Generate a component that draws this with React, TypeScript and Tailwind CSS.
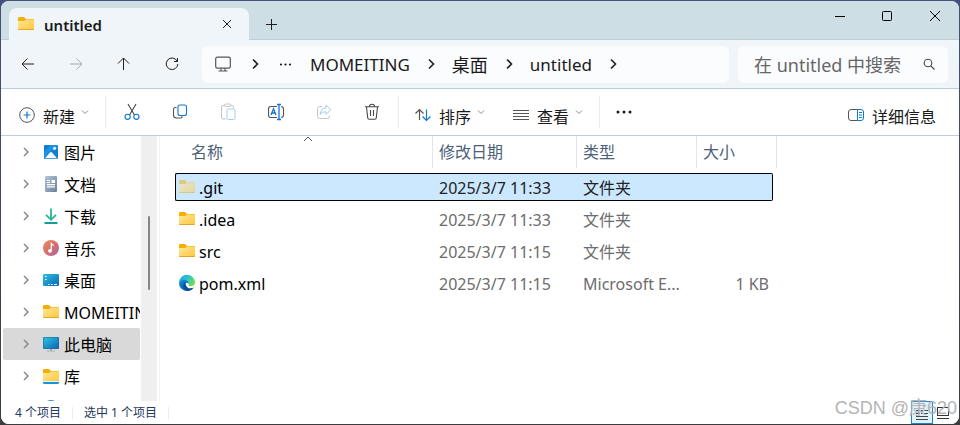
import type { ReactNode } from "react";

const FONT = "font-['Noto_Sans','Noto_Sans_CJK_SC',sans-serif]";

function Folder({ faded = false, library = false }: { faded?: boolean; library?: boolean }) {
  return (
    <svg width="16" height="16" viewBox="0 0 16 16" className={faded ? "opacity-50" : ""} aria-hidden="true">
      <defs>
        <linearGradient id="folderFront" x1="0" y1="0" x2="1" y2="1">
          <stop offset="0" stopColor="#ffe69a" />
          <stop offset="1" stopColor="#ffc83a" />
        </linearGradient>
      </defs>
      <path d="M0 2.2Q0 1 1.2 1H6L8 3H15Q16 3 16 4V8H0Z" fill="#f5ae06" />
      <path d="M0 5H6.2L8 3.6H15.2Q16 3.6 16 4.4V13Q16 14 15 14H1Q0 14 0 13Z" fill="url(#folderFront)" />
      <path d="M0.4 13.5H15.6" stroke="#e5a421" />
      {library && <path d="M0 13H16V14.5Q16 16 14.5 16H1.5Q0 16 0 14.5Z" fill="#1297dc" />}
      {library && <path d="M0 13.5H16" stroke="#e9f6fd" />}
    </svg>
  );
}

function Pictures() {
  return (
    <svg width="16" height="16" viewBox="0 0 16 16" aria-hidden="true">
      <rect x="1" y="1" width="14" height="14" rx="1.2" fill="#107fd2" />
      <path d="M1 14V8L8 1H13L15 3V5L8 7Z" fill="#1e92e0" />
      <path d="M2 14.2L7 8.4Q8 7.5 9 8.4L14 14.2Z" fill="#f4fafe" />
      <circle cx="11.6" cy="4.5" r="1.4" fill="#fff" />
    </svg>
  );
}

function Documents() {
  return (
    <svg width="16" height="16" viewBox="0 0 16 16" aria-hidden="true">
      <defs>
        <linearGradient id="docFill" x1="0" y1="0" x2="1" y2="1">
          <stop offset="0" stopColor="#b4c6d9" />
          <stop offset="1" stopColor="#668098" />
        </linearGradient>
      </defs>
      <rect x="2" y="0" width="12" height="16" rx="1.2" fill="url(#docFill)" />
      <path d="M4 4.5H7M4 6.5H7M4 8.7H12M4 10.8H12" stroke="#fff" strokeWidth="1.2" />
      <rect x="8.5" y="4" width="3.5" height="3" fill="#fff" />
    </svg>
  );
}

function Downloads() {
  return (
    <svg width="16" height="16" viewBox="0 0 16 16" fill="none" aria-hidden="true">
      <path d="M8 0.5V11M3 6.8L8 11.8L13 6.8" stroke="#23b893" strokeWidth="1.8" />
      <path d="M2.2 15H13.8" stroke="#129f9a" strokeWidth="1.8" strokeLinecap="round" />
    </svg>
  );
}

function Music() {
  return (
    <svg width="16" height="16" viewBox="0 0 16 16" aria-hidden="true">
      <defs>
        <linearGradient id="musicFill" x1="0" y1="0" x2="1" y2="1">
          <stop offset="0" stopColor="#ee8d54" />
          <stop offset="0.55" stopColor="#d36f71" />
          <stop offset="1" stopColor="#a761ac" />
        </linearGradient>
      </defs>
      <circle cx="8" cy="8" r="8" fill="url(#musicFill)" />
      <circle cx="7" cy="10.8" r="1.9" fill="#fff" />
      <path d="M8.3 10.8V3.4L10.6 5.6" stroke="#fff" strokeWidth="1.3" fill="none" />
    </svg>
  );
}

function Desktop() {
  return (
    <svg width="16" height="16" viewBox="0 0 16 16" aria-hidden="true">
      <defs>
        <linearGradient id="deskFill" x1="0" y1="0" x2="1" y2="1">
          <stop offset="0" stopColor="#2cc3dc" />
          <stop offset="1" stopColor="#0c65b8" />
        </linearGradient>
      </defs>
      <rect x="0" y="2" width="16" height="12" rx="1.2" fill="url(#deskFill)" />
      <path d="M2 4.5H3.6M2 7.5H3.6M5 12.5H6.5M8 12.5H9.5M11 12.5H14" stroke="#fff" strokeWidth="1.2" />
    </svg>
  );
}

function Computer() {
  return (
    <svg width="16" height="16" viewBox="0 0 16 16" aria-hidden="true">
      <path d="M7 12H9V14.5H7Z" fill="#9aa4ab" />
      <path d="M4 15H12" stroke="#a9b1b6" />
      <rect x="0" y="1" width="16" height="12" rx="1" fill="#20648f" />
      <rect x="0.6" y="1.6" width="14.8" height="10.8" rx="0.6" fill="url(#deskFill)" />
    </svg>
  );
}

function Edge() {
  return (
    <svg width="16" height="16" viewBox="0 0 16 16" aria-hidden="true">
      <defs>
        <linearGradient id="edgeTop" x1="0" y1="0" x2="1" y2="0.6">
          <stop offset="0" stopColor="#1ba4e0" />
          <stop offset="0.5" stopColor="#2bc3d2" />
          <stop offset="1" stopColor="#6ee04c" />
        </linearGradient>
        <linearGradient id="edgeBody" x1="0" y1="0" x2="0.6" y2="1">
          <stop offset="0" stopColor="#128fe0" />
          <stop offset="1" stopColor="#0b5cb0" />
        </linearGradient>
      </defs>
      <path d="M0 8A8 8 0 0 1 16 7.6C16 10 14.2 11.2 12 11.2C10 11.2 9 10.5 9.5 9.6C11 7 8 5 5.6 5C3 5 1 6 0 8Z" fill="url(#edgeTop)" />
      <path d="M0 8C0.8 5.5 3 4.4 5.8 4.7C9 5 10.4 7.4 9.4 9.4L6.5 8.5L10 15.7A8 8 0 0 1 0 8Z" fill="url(#edgeBody)" />
      <path d="M6.6 7C5 9.5 7 13.2 11.2 13.2C13 13.2 14.2 12.8 15.1 12C13.6 14.8 10.5 16.4 8 16C3.5 14.5 3 9 6.6 7Z" fill="#0b4e96" />
      <path d="M7 8.4C6.6 10.8 9 12.7 11.5 12.7C13 12.7 14.3 12.3 15.2 11.4C14 11.3 12.6 11.4 11.2 11.2C9.4 11 9 10.5 9.5 9.5C9.8 8.2 7.8 7.2 7 8.4Z" fill="#fff" />
    </svg>
  );
}

function Line({ d, size = 16, color = "#1f1f1f", width = 1, className = "" }: { d: string; size?: number; color?: string; width?: number; className?: string }) {
  return (
    <svg width={size} height={size} viewBox={`0 0 ${size} ${size}`} fill="none" stroke={color} strokeWidth={width} className={`shrink-0 ${className}`} aria-hidden="true">
      <path d={d} />
    </svg>
  );
}

function Crumb({ children }: { children: ReactNode }) {
  return (
    <>
      {children}
      <Line d="M6 3.5L10.5 8L6 12.5" width={1.6} className="mx-[13px]" />
    </>
  );
}

function IconButton({ label, className, children }: { label: string; className: string; children: ReactNode }) {
  return (
    <button aria-label={label} className={`flex shrink-0 items-center justify-center ${className}`}>
      {children}
    </button>
  );
}

function MenuButton({ label, icon, caret = true }: { label: string; icon: ReactNode; caret?: boolean }) {
  return (
    <button className="flex h-full shrink-0 items-center text-[16px] leading-6 text-[#1a1a1a]">
      <span className="pt-[6px] pr-2">{icon}</span>
      <span className="pt-[10px]">{label}</span>
      {caret && <Line d="M1 2.5L4 5.5L7 2.5" size={8} color="#8a8a8a" className="ml-[6px]" />}
    </button>
  );
}

const Divider = ({ className = "" }: { className?: string }) => <div className={`h-8 w-px shrink-0 bg-[#ebebeb] ${className}`} />;

const tree = [
  { name: "图片", icon: <Pictures /> },
  { name: "文档", icon: <Documents /> },
  { name: "下载", icon: <Downloads /> },
  { name: "音乐", icon: <Music /> },
  { name: "桌面", icon: <Desktop /> },
  { name: "MOMEITING", icon: <Folder /> },
  { name: "此电脑", icon: <Computer />, active: true },
  { name: "库", icon: <Folder library /> },
];

const files = [
  { name: ".git", date: "2025/3/7 11:33", type: "文件夹", size: "", icon: <Folder faded />, selected: true },
  { name: ".idea", date: "2025/3/7 11:33", type: "文件夹", size: "", icon: <Folder /> },
  { name: "src", date: "2025/3/7 11:15", type: "文件夹", size: "", icon: <Folder /> },
  { name: "pom.xml", date: "2025/3/7 11:15", type: "Microsoft E...", size: "1 KB", icon: <Edge /> },
];

function TitleBar() {
  return (
    <header className="flex h-[39px] shrink-0 items-start border-b border-[#bccfd6] bg-[#cddee5] pl-2">
      <div className="mt-[7px] flex h-8 w-60 shrink-0 items-center rounded-t-lg bg-[#eff5f8] pr-3 pl-[9px]">
        <Folder />
        <span className="ml-[10px] flex-1 pt-[2px] text-[15px] leading-5 font-semibold text-[#1a1a1a]">untitled</span>
        <IconButton label="关闭标签页" className="size-5">
          <Line d="M1 1L9 9M9 1L1 9" size={10} />
        </IconButton>
      </div>
      <IconButton label="新标签页" className="mt-[7px] ml-[6px] size-8">
        <Line d="M5.5 0V11M0 5.5H11" size={11} />
      </IconButton>
      <div className="ml-auto flex">
        <IconButton label="最小化" className="h-[30px] w-[46px]"><Line d="M0 5.5H10" size={10} color="#000" /></IconButton>
        <IconButton label="最大化" className="h-[30px] w-12">
          <svg width="10" height="10" fill="none" stroke="#000" aria-hidden="true"><rect x="0.5" y="0.5" width="9" height="9" rx="1" /></svg>
        </IconButton>
        <IconButton label="关闭" className="h-[30px] w-12"><Line d="M0 0L10 10M10 0L0 10" size={10} color="#000" /></IconButton>
      </div>
    </header>
  );
}

function AddressBar() {
  return (
    <nav className="flex h-[49px] shrink-0 items-center border-b border-[#b9ccd3] bg-[#eff5f8] pr-[11px] pl-[3px]">
      <IconButton label="后退" className="h-9 w-12"><Line d="M14 8H2M7.5 2.5L2 8L7.5 13.5" /></IconButton>
      <IconButton label="前进" className="h-9 w-12"><Line d="M2 8H14M8.5 2.5L14 8L8.5 13.5" color="#a5aaac" /></IconButton>
      <IconButton label="向上" className="h-9 w-12"><Line d="M7.5 14V2M2 7.5L7.5 2L13 7.5" /></IconButton>
      <IconButton label="刷新" className="h-9 w-12"><Line d="M13.2 5.2A5.8 5.8 0 1 0 13.8 8M13.5 2V5.5H10" /></IconButton>
      <div className="ml-[6px] flex h-[37px] flex-1 items-center rounded-md bg-[#fbfcfe] pl-[13px] text-[17px] leading-6 text-[#1a1a1a]">
        <svg width="16" height="16" fill="none" stroke="#555" strokeWidth="1.2" aria-hidden="true">
          <rect x="0.7" y="1.2" width="14.6" height="11" rx="1.6" />
          <path d="M6 12.5V14.5M10 12.5V14.5M3.5 15H12.5" />
        </svg>
        <Line d="M6 3.5L10.5 8L6 12.5" width={1.6} className="mx-4" />
        <button aria-label="更多位置" className="mr-[18px] flex h-6 items-center">
          <svg width="13" height="3" fill="#1a1a1a" aria-hidden="true"><circle cx="2" cy="1.5" r="1.1" /><circle cx="6.5" cy="1.5" r="1.1" /><circle cx="11" cy="1.5" r="1.1" /></svg>
        </button>
        <Crumb><button className="pt-[2px]">MOMEITING</button></Crumb>
        <Crumb><button className="pt-[2px] text-[18px]">桌面</button></Crumb>
        <Crumb><button className="pt-[2px]">untitled</button></Crumb>
      </div>
      <div className="ml-[9px] flex h-[37px] w-[210px] shrink-0 items-center rounded-md bg-[#fbfcfe] pr-3 pl-4">
        <input aria-label="搜索" placeholder="在 untitled 中搜索" className="w-full min-w-0 bg-transparent pt-[2px] text-[18px] leading-6 outline-none placeholder:text-[#666]" />
        <svg width="14" height="14" fill="none" stroke="#444" strokeWidth="1.1" className="shrink-0" aria-hidden="true"><circle cx="6" cy="6" r="3.8" /><path d="M8.8 8.8L12.5 12.5" /></svg>
      </div>
    </nav>
  );
}

function Toolbar() {
  return (
    <div role="toolbar" aria-label="命令栏" className="flex h-[47px] shrink-0 items-center border-b border-[#bccfd6] bg-white pr-[23px] pl-[18px]">
      <MenuButton
        label="新建"
        icon={
          <svg width="16" height="16" fill="none" aria-hidden="true"><circle cx="8" cy="8" r="7.3" stroke="#555" /><path d="M8 4.5V11.5M4.5 8H11.5" stroke="#0f78d4" strokeWidth="1.2" /></svg>
        }
      />
      <Divider className="mr-[2px] ml-4" />
      <IconButton label="剪切" className="h-full w-12">
        <svg width="16" height="18" fill="none" strokeWidth="1.1" aria-hidden="true"><path d="M4 1L10.5 12M12 1L5.5 12" stroke="#444" /><circle cx="3.6" cy="13.8" r="2.6" stroke="#0f78d4" /><circle cx="12.4" cy="13.8" r="2.6" stroke="#0f78d4" /></svg>
      </IconButton>
      <IconButton label="复制" className="h-full w-12">
        <svg width="16" height="16" fill="none" strokeWidth="1.1" aria-hidden="true"><path d="M4.5 3.5H3.5Q1.5 3.5 1.5 5.5V11Q1.5 14 4.5 14H8.5Q10.2 14 10.2 12.3" stroke="#555" /><rect x="6" y="1" width="8.5" height="10.5" rx="2" stroke="#0f78d4" /></svg>
      </IconButton>
      <IconButton label="粘贴" className="h-full w-12">
        <svg width="16" height="18" fill="none" aria-hidden="true"><path d="M5 2.5H3Q1.5 2.5 1.5 4V14.5Q1.5 16 3 16H6M11 2.5H12Q13.5 2.5 13.5 4V5" stroke="#c4c4c4" /><rect x="4.5" y="1" width="6.5" height="2.5" rx="1.2" stroke="#c4c4c4" /><rect x="7" y="6" width="8" height="10.5" rx="1.4" stroke="#a3cdee" /></svg>
      </IconButton>
      <IconButton label="重命名" className="h-full w-12">
        <svg width="18" height="18" fill="none" aria-hidden="true"><path d="M10 3.5H4Q1.5 3.5 1.5 6V12Q1.5 14.5 4 14.5H10M14 3.5Q16.5 3.5 16.5 6V12Q16.5 14.5 14 14.5" stroke="#555" strokeWidth="1.1" /><path d="M4 12L6.5 5.8L9 12M5 10H8M12 1.5V16.5M10 1.5H14M10 16.5H14" stroke="#0f78d4" strokeWidth="1.3" /></svg>
      </IconButton>
      <IconButton label="共享" className="h-full w-12">
        <svg width="16" height="16" fill="none" aria-hidden="true"><path d="M6 2.5H3.5Q1.5 2.5 1.5 4.5V12.5Q1.5 14.5 3.5 14.5H11.5Q13.5 14.5 13.5 12.5V11.5" stroke="#c4c4c4" /><path d="M10 1.2L14.8 5.8L10 10.3V7.8Q6 7.5 4 10.5Q4.8 4.3 10 3.8Z" stroke="#a3cdee" /></svg>
      </IconButton>
      <IconButton label="删除" className="h-full w-12">
        <svg width="16" height="18" fill="none" stroke="#484848" strokeWidth="1.1" aria-hidden="true"><path d="M1 3.8H15M5.5 3.5Q5.5 1.2 8 1.2Q10.5 1.2 10.5 3.5M2.5 4L3.7 14.7Q3.8 16.3 5.2 16.3H10.8Q12.2 16.3 12.3 14.7L13.5 4M6.5 7V13M9.5 7V13" /></svg>
      </IconButton>
      <Divider className="mr-4 ml-[2px]" />
      <MenuButton
        label="排序"
        icon={
          <svg width="16" height="16" fill="none" strokeWidth="1.2" aria-hidden="true"><path d="M4.5 13V2.5M0.5 6.5L4.5 2.5L8.5 6.5" stroke="#555" /><path d="M11.5 2.5V13.5M7.5 9.5L11.5 13.5L15.5 9.5" stroke="#0f78d4" /></svg>
        }
      />
      <div className="w-7 shrink-0" />
      <MenuButton label="查看" icon={<Line d="M0 3.5H16M0 6.5H16M0 9.5H16M0 12.5H16" color="#555" />} />
      <Divider className="mx-4" />
      <IconButton label="查看更多" className="h-full">
        <svg width="16" height="4" fill="#1a1a1a" aria-hidden="true"><circle cx="2" cy="2" r="1.5" /><circle cx="8" cy="2" r="1.5" /><circle cx="14" cy="2" r="1.5" /></svg>
      </IconButton>
      <div className="ml-auto h-full">
        <MenuButton
          label="详细信息"
          caret={false}
          icon={
            <svg width="16" height="16" fill="none" aria-hidden="true"><path d="M9.5 2.5H3Q0.5 2.5 0.5 5V11Q0.5 13.5 3 13.5H9.5" stroke="#555" /><path d="M9.5 2.5H13Q15.5 2.5 15.5 5V11Q15.5 13.5 13 13.5H9.5ZM11 5.5H14M11 8H14M11 10.5H14" stroke="#0f78d4" /></svg>
          }
        />
      </div>
    </div>
  );
}

function Sidebar() {
  return (
    <aside className="flex w-[159px] shrink-0 overflow-hidden border-r border-[#f3f3f3]">
      <ul className="mr-px w-[139px] shrink-0 pl-[2px]">
        {tree.map((item) => (
          <li key={item.name}>
            <button className={`flex h-8 w-full items-center overflow-hidden rounded-xs pl-[18px] text-[16px] leading-6 text-black ${item.active ? "bg-[#d9d9d9]" : ""}`}>
              <Line d="M3 2L7 6L3 10" size={12} color="#8a8a8a" width={1.5} className="mr-[10px]" />
              <span className="shrink-0">{item.icon}</span>
              <span className="ml-[5px] pt-px whitespace-nowrap">{item.name}</span>
            </button>
          </li>
        ))}
        <li className="flex h-8 items-center pl-10">
          <svg width="16" height="16" aria-hidden="true"><circle cx="8" cy="8" r="8" fill="#3a8fc4" /></svg>
        </li>
      </ul>
      <div className="w-4 shrink-0 bg-[#efefef] pt-20">
        <div className="ml-[7px] h-[74px] w-[2px] rounded-full bg-[#858585]" />
      </div>
    </aside>
  );
}

function FileTable() {
  return (
    <main className="min-w-0 flex-1 overflow-hidden pl-[15px]">
      <table className="w-[602px] table-fixed border-collapse text-left text-[16px] leading-6">
        <colgroup>
          <col className="w-[258px]" />
          <col className="w-[144px]" />
          <col className="w-[120px]" />
          <col className="w-20" />
        </colgroup>
        <thead>
          <tr className="h-[35px] align-top text-[#4c607a]">
            {["名称", "修改日期", "类型", "大小"].map((label, i) => (
              <th key={label} className="relative p-0 font-normal">
                <div className={`flex h-8 items-center border-r border-[#e5e5e5] ${i === 0 ? "pl-4" : "pl-[6px]"}`}>{label}</div>
                {i === 0 && <Line d="M1 5L5 1L9 5" size={10} color="#555" className="absolute top-0 left-32" />}
              </th>
            ))}
          </tr>
        </thead>
        <tbody>
          {files.map((f) => {
            const cell = `flex h-7 items-center border-y pt-[2px] ${f.selected ? "border-black bg-[#cce8ff] text-[#222]" : "border-transparent text-[#6d6d6d]"}`;
            return (
              <tr key={f.name} className="h-8" aria-selected={f.selected ?? false}>
                <td className="px-0 py-[2px]">
                  <div className={`${cell} rounded-l-xs border-l pl-[3px]`}>
                    <span className="shrink-0 pb-[2px]">{f.icon}</span>
                    <span className="ml-1 text-black">{f.name}</span>
                  </div>
                </td>
                <td className="px-0 py-[2px]"><div className={`${cell} pl-[6px] whitespace-nowrap`}>{f.date}</div></td>
                <td className="px-0 py-[2px]"><div className={`${cell} pl-[6px] whitespace-nowrap`}>{f.type}</div></td>
                <td className="py-[2px] pr-1 pl-0"><div className={`${cell} justify-end rounded-r-xs border-r pr-[3px]`}>{f.size}</div></td>
              </tr>
            );
          })}
        </tbody>
      </table>
    </main>
  );
}

function StatusBar() {
  return (
    <footer className="relative flex h-[23px] shrink-0 items-center bg-white pl-[14px] text-[12px] leading-4 text-[#1e395b]">
      <span>4 个项目</span>
      <div className="mx-[11px] h-3 w-px bg-[#ededed]" />
      <span>选中 1 个项目</span>
      <div className="mx-[11px] h-3 w-px bg-[#ededed]" />
      <div className="ml-auto flex h-full items-center pr-[6px]">
        <IconButton label="详细信息视图" className="h-full w-[22px] border border-[#1683d8] bg-[#e0f2fb]">
          <Line d="M1 4.5H5M6 4.5H13M1 7.5H5M6 7.5H13M1 10.5H13M1 13.5H13" size={14} color="#444" />
        </IconButton>
        <IconButton label="大图标视图" className="h-full w-5">
          <svg width="12" height="14" fill="none" stroke="#333" aria-hidden="true"><rect x="0.5" y="1.5" width="11" height="8" /><path d="M0 12.5H12" /></svg>
        </IconButton>
      </div>
      <span className="pointer-events-none absolute right-[2px] bottom-1 font-['Liberation_Sans','Noto_Sans_CJK_SC',sans-serif] text-[18px] leading-6 whitespace-nowrap text-[#b4b4b4]">
        CSDN @康620
      </span>
    </footer>
  );
}

export default function App() {
  return (
    <div className={`h-screen bg-linear-to-b from-[#44517c] to-[#3c3c3e] p-px ${FONT}`}>
      <div className="flex h-full flex-col overflow-hidden rounded-lg bg-white">
        <TitleBar />
        <AddressBar />
        <Toolbar />
        <div className="flex min-h-0 flex-1">
          <Sidebar />
          <FileTable />
        </div>
        <StatusBar />
      </div>
    </div>
  );
}
